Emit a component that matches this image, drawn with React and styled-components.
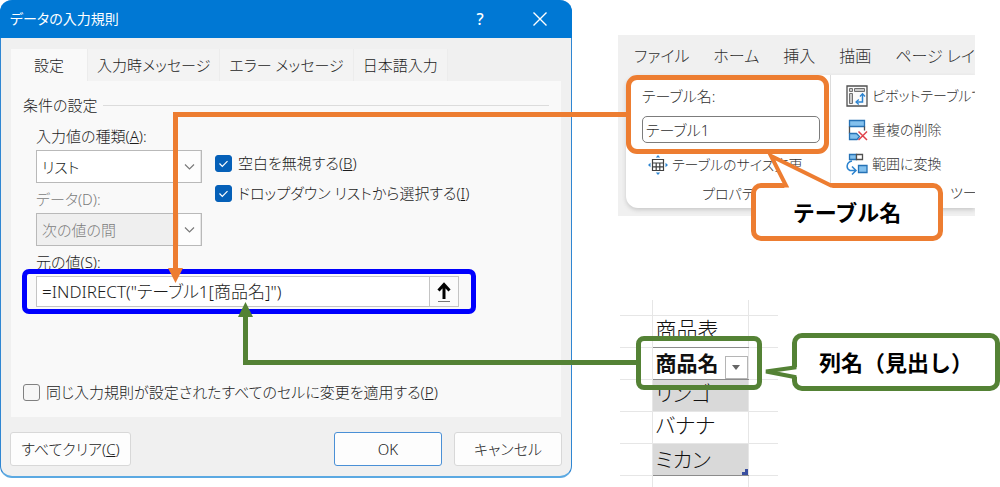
import React from 'react';
import styled, { createGlobalStyle, css } from 'styled-components';

const ORANGE = '#ed7d31';
const GREEN = '#548235';
const BLUE = '#0000fe';

const GlobalStyle = createGlobalStyle`
  * { box-sizing: border-box; }
  body {
    margin: 0;
    background: #fff;
    color: #1c1c1c;
    font-family: "Noto Sans", "Noto Sans CJK JP", sans-serif;
    font-size: 15px;
    font-weight: 300;
    line-height: 24px;
    font-feature-settings: "palt";
  }
  button, input, select {
    font: inherit;
    font-feature-settings: inherit;
    color: inherit;
    margin: 0;
  }
`;

const Page = styled.div`
  display: flex;
  align-items: flex-start;
  min-height: 100vh;
  overflow: hidden;
`;

/* ---------- dialog ---------- */

const Dialog = styled.section`
  position: relative;
  flex: 1 1 auto;
  min-width: 500px;
  background: #f0f0f0;
  border: 1px solid #2f86d2;
  border-width: 0 1px 2px 1px;
  border-bottom-color: #5ba9e2;
  border-radius: 12px;
`;

const TitleBar = styled.header`
  display: flex;
  align-items: center;
  height: 38px;
  margin: 0 -1px;
  padding: 0 16px 0 10px;
  background: #0078d4;
  color: #fff;
  border-radius: 12px 12px 0 0;
`;

const Title = styled.h1`
  flex: 1;
  margin: 0;
  font-size: 14px;
  font-weight: 400;
`;

const TitleButton = styled.button`
  display: flex;
  align-items: center;
  justify-content: center;
  width: 32px;
  height: 32px;
  margin-left: 28px;
  padding: 0;
  border: 0;
  background: none;
  color: #fff;
  font-size: 16px;
  font-weight: 500;
`;

const Tabs = styled.div`
  display: flex;
  margin: 11px 10px 0;
`;

const Tab = styled.button`
  height: 32px;
  padding: 0 9px;
  border: 0;
  border-right: 1px solid #ececec;
  background: #f3f3f3;
  white-space: nowrap;
  ${p => p.$active && css`
    padding: 0 23px;
    background: #f9f9f9;
  `}
`;

const Panel = styled.div`
  margin: 0 10px;
  padding: 12px 12px 13px;
  background: #f9f9f9;
`;

const Legend = styled.h2`
  display: flex;
  align-items: center;
  gap: 6px;
  margin: 0;
  font-size: 15px;
  font-weight: 300;
  &::after {
    content: "";
    flex: 1;
    height: 1px;
    background: #dcdcdc;
  }
`;

const Fields = styled.div`
  display: flex;
  gap: 13px;
  padding: 7px 0 0 13px;
`;

const Column = styled.div`
  display: flex;
  flex-direction: column;
`;

const Label = styled.label`
  display: block;
  height: 26px;
  line-height: 24px;
  color: ${p => (p.$muted ? '#7c7c7c' : 'inherit')};
`;

const SelectBox = styled.div`
  position: relative;
  width: 166px;
  height: 33px;
  margin-bottom: 4px;
  svg {
    position: absolute;
    top: 1px;
    right: 1px;
    pointer-events: none;
  }
`;

const Select = styled.select`
  appearance: none;
  width: 100%;
  height: 100%;
  padding: 0 24px 0 5px;
  border: 1px solid #b9b9b9;
  border-radius: 0;
  background: #fff;
  opacity: 1;
  &:disabled {
    background: #efefef;
    color: #7c7c7c;
  }
`;

const Checks = styled.div`
  display: flex;
  flex-direction: column;
  gap: 6px;
  padding-top: 27px;
`;

const CheckLabel = styled.label`
  display: flex;
  align-items: center;
  gap: 6px;
  white-space: nowrap;
`;

const CheckInput = styled.input`
  appearance: none;
  flex: none;
  width: 17px;
  height: 17px;
  border: 1px solid #808080;
  border-radius: 3px;
  background: #f6f6f6;
  &:checked {
    border-color: #0560b8;
    background: #0560b8 url("data:image/svg+xml,%3Csvg xmlns='http://www.w3.org/2000/svg' viewBox='0 0 15 15'%3E%3Cpath d='M3.5 7.5l2.8 2.8 5.2-5.2' fill='none' stroke='white' stroke-width='1.2'/%3E%3C/svg%3E");
  }
`;

const Source = styled.div`
  padding-left: 13px;
`;

const SourceField = styled.div`
  position: relative;
  display: flex;
  width: 423px;
  height: 31px;
  border: 1px solid #c4c4c4;
  background: #fff;
`;

const SourceInput = styled.input`
  flex: 1;
  min-width: 0;
  padding: 0 5px;
  border: 0;
  background: none;
  font-size: 17px;
`;

const PickButton = styled.button`
  display: flex;
  align-items: center;
  justify-content: center;
  width: 29px;
  padding: 0;
  border: 0;
  border-left: 1px solid #c4c4c4;
  background: #fbfbfb;
`;

const ApplyRow = styled.div`
  padding-top: 73px;
`;

const Footer = styled.footer`
  display: flex;
  gap: 12px;
  padding: 15px 9px 10px;
`;

const PushButton = styled.button`
  width: ${p => p.$width}px;
  height: 34px;
  margin-right: ${p => (p.$first ? 'auto' : '0')};
  padding: 0;
  border: 1px solid ${p => (p.$default ? '#4a90d6' : '#d8d8d8')};
  border-radius: 3px;
  background: #fdfdfd;
`;

/* ---------- annotations drawn over the windows ---------- */

const Ring = styled.div`
  position: absolute;
  inset: ${p => p.$inset};
  border: 5px solid ${p => p.$color};
  border-radius: ${p => p.$radius}px;
  pointer-events: none;
`;

const Connector = styled.div`
  position: absolute;
  left: ${p => p.$left}px;
  right: ${p => p.$right}px;
  top: ${p => p.$top}px;
  height: ${p => p.$height}px;
  border: 0 solid ${p => p.$color};
  border-left-width: 5px;
  border-top-width: ${p => (p.$up ? 0 : 5)}px;
  border-bottom-width: ${p => (p.$up ? 5 : 0)}px;
  pointer-events: none;
  z-index: 2;
  &::before {
    content: "";
    position: absolute;
    left: -10px;
    ${p => (p.$up ? 'top' : 'bottom')}: -14px;
    width: 15px;
    height: 15px;
    background: ${p => p.$color};
    clip-path: ${p => (p.$up ? 'polygon(50% 0, 100% 100%, 0 100%)' : 'polygon(0 0, 100% 0, 50% 100%)')};
  }
`;

const CalloutBox = styled.div`
  position: absolute;
  left: ${p => p.$left}px;
  top: ${p => p.$top}px;
  width: ${p => p.$width}px;
  height: 58px;
  display: flex;
  align-items: center;
  justify-content: center;
  border: 5px solid ${p => p.$color};
  border-radius: 10px;
  background: #fff;
  color: #000;
  font-size: 22px;
  font-weight: 700;
  font-feature-settings: normal;
  white-space: nowrap;
  z-index: 3;
  svg {
    position: absolute;
    overflow: visible;
    left: -5px;
    top: -5px;
  }
`;

/* ---------- ribbon ---------- */

const Side = styled.aside`
  flex: 0 0 428px;
  min-width: 0;
  padding: 35px 0 0 46px;
`;

const RibbonWrap = styled.div`
  position: relative;
  margin-right: 25px;
`;

const Ribbon = styled.section`
  height: 181px;
  overflow: hidden;
  background: #f0f0f0;
  color: #303030;
`;

const RibbonTabs = styled.nav`
  display: flex;
  gap: 24px;
  height: 40px;
  padding: 0 0 0 16px;
  line-height: 42px;
  font-size: 16px;
  white-space: nowrap;
`;

const RibbonTab = styled.a`
  color: inherit;
  text-decoration: none;
`;

const RibbonBody = styled.div`
  display: flex;
  height: 133px;
  margin-left: 8px;
  border-radius: 12px 0 0 12px;
  background: #fff;
  box-shadow: 0 2px 4px #c9c9c9;
`;

const NameGroup = styled.div`
  position: relative;
  flex: 0 0 205px;
  padding: 9px 10px 0 16px;
  border-right: 1px solid #dcdcdc;
`;

const NameLabel = styled.label`
  display: block;
  height: 32px;
`;

const NameInput = styled.input`
  display: block;
  width: 178px;
  height: 27px;
  padding: 0 3px;
  border: 1px solid #7c7c7c;
  border-radius: 5px;
  background: #fff;
`;

const ToolButton = styled.button`
  display: flex;
  align-items: center;
  gap: 4px;
  height: 34px;
  padding: 0;
  border: 0;
  background: none;
  font-size: 14px;
  white-space: nowrap;
`;

const ResizeRow = styled.div`
  padding: 5px 0 0 6px;
`;

const GroupName = styled.div`
  padding-left: ${p => p.$indent}px;
  font-size: 14px;
  line-height: 24px;
  white-space: nowrap;
`;

const ToolGroup = styled.div`
  flex: 1;
  min-width: 0;
  padding: 4px 0 0 15px;
`;

/* ---------- sheet ---------- */

const SheetWrap = styled.div`
  position: relative;
  margin-top: 84px;
`;

const Sheet = styled.table`
  width: 158px;
  margin-left: 2px;
  table-layout: fixed;
  border-collapse: collapse;
  color: #111;
  font-size: 21px;
`;

const Cell = styled.td`
  height: ${p => p.$height || 32}px;
  padding: 0 0 ${p => (p.$flush ? 0 : 4)}px 3px;
  border: 1px solid #e6e6e6;
  border-top-width: ${p => (p.$first ? 0 : 1)}px;
  border-bottom-color: ${p => (p.$ruled ? '#8c8c8c' : '#e6e6e6')};
  background: ${p => (p.$band ? '#d9d9d9' : '#fff')};
  line-height: 26px;
  text-align: left;
  white-space: nowrap;
`;

const EdgeCell = styled(Cell)`
  width: ${p => p.$width}px;
  padding: 0;
  border-left: 0;
  border-right: 0;
`;

const CellInner = styled.div`
  display: flex;
  align-items: center;
  justify-content: space-between;
  height: 31px;
  font-weight: ${p => (p.$head ? 700 : 300)};
  > :last-child {
    align-self: flex-end;
  }
`;

const FilterButton = styled.button`
  display: flex;
  align-items: center;
  justify-content: center;
  width: 23px;
  height: 23px;
  padding: 0;
  border: 1px solid #b5b5b5;
  background: #fff;
`;

/* ---------- pieces ---------- */

const Chevron = () => (
  <svg width="22" height="31" viewBox="0 0 22 31">
    <path d="M0 0h22v31H0z" fill="#fdfdfd" />
    <path d="M22 0v31" stroke="#d0d0d0" />
    <path d="M6 13.500l4.500 4.500 4.500-4.500" fill="none" stroke="#7a7a7a" strokeWidth="1.200" />
  </svg>
);

const PivotIcon = () => (
  <svg width="22" height="22" viewBox="0 0 22 22" fill="none">
    <path d="M1 1h20v20H1z" fill="#fafafa" stroke="#505050" strokeWidth="1.300" />
    <path d="M3.500 3.500h3v3h-3zM8.500 3.500h10v3h-10zM3.500 8.500h3v10h-3z" fill="#c9c9c9" stroke="#707070" />
    <path d="M16.500 9.500v7.500h-6" stroke="#2b83cf" strokeWidth="1.500" />
    <path d="M14 11.500l2.500-2.800 2.500 2.800M12.800 14.400L10 17l2.800 2.600" stroke="#2b83cf" strokeWidth="1.300" />
  </svg>
);

const DedupeIcon = () => (
  <svg width="22" height="22" viewBox="0 0 22 22" fill="none">
    <path d="M3.500 1.500h15v6h-15z" fill="#83c1ee" stroke="#2672b5" strokeWidth="1.300" />
    <path d="M3.500 7.500v7M18.500 7.500v4" stroke="#505050" strokeWidth="1.300" />
    <path d="M3.500 14.500h7l3 3-2.500 3H3.500z" fill="#83c1ee" stroke="#2672b5" strokeWidth="1.300" />
    <path d="M12.500 12.500l8.500 8.500M21 12.500L12.500 21" stroke="#e0424a" strokeWidth="1.500" />
  </svg>
);

const ConvertIcon = () => (
  <svg width="22" height="22" viewBox="0 0 22 22" fill="none">
    <path d="M3.500 1.500h7v5h-7z" fill="#83c1ee" stroke="#2672b5" strokeWidth="1.300" />
    <path d="M10.500 1.500h6v5h-6z" fill="#fff" stroke="#505050" strokeWidth="1.300" />
    <path d="M12.500 12.500h8.500v7h-8.500z" fill="#83c1ee" stroke="#2672b5" strokeWidth="1.300" />
    <path d="M6 8C.500 9-.500 15.500 4 17.500h5.500M6 13.500l4 4-4 4" stroke="#2b83cf" strokeWidth="1.500" />
  </svg>
);

const ResizeIcon = () => (
  <svg width="20" height="20" viewBox="0 0 20 20" fill="none">
    <path d="M4.500 4.500h11v11h-11zM4.500 8h11M4.500 11.800h11M8.200 8v7.500M11.800 8v7.500" stroke="#404040" strokeWidth="1.200" />
    <path d="M10 0l2.200 2.500H7.800zM10 20l2.200-2.500H7.800zM0 10l2.500-2.200v4.400zM20 10l-2.500-2.200v4.400z" fill="#2b83cf" />
  </svg>
);

const Check = ({ id, checked, text, accessKey }) => (
  <CheckLabel htmlFor={id}>
    <CheckInput id={id} type="checkbox" defaultChecked={checked} />
    <span>{text}(<u>{accessKey}</u>)</span>
  </CheckLabel>
);

const Edge = ({ width, height, first }) => (
  <EdgeCell $width={width} $height={height} $first={first} />
);

export default function App() {
  return (
    <>
      <GlobalStyle />
      <Page>
        <Dialog>
          <TitleBar>
            <Title>データの入力規則</Title>
            <TitleButton aria-label="ヘルプ">?</TitleButton>
            <TitleButton aria-label="閉じる">
              <svg width="14" height="14" viewBox="0 0 14 14">
                <path d="M.500 .500l13 13M13.500 .500l-13 13" stroke="#fff" strokeWidth="1.400" />
              </svg>
            </TitleButton>
          </TitleBar>

          <Tabs role="tablist">
            <Tab role="tab" $active>設定</Tab>
            <Tab role="tab">入力時メッセージ</Tab>
            <Tab role="tab">エラー メッセージ</Tab>
            <Tab role="tab">日本語入力</Tab>
          </Tabs>

          <Panel>
            <Legend>条件の設定</Legend>
            <Fields>
              <Column>
                <Label htmlFor="kind">入力値の種類(<u>A</u>):</Label>
                <SelectBox>
                  <Select id="kind"><option>リスト</option></Select>
                  <Chevron />
                </SelectBox>
                <Label htmlFor="data" $muted>データ(D):</Label>
                <SelectBox>
                  <Select id="data" disabled><option>次の値の間</option></Select>
                  <Chevron />
                </SelectBox>
              </Column>
              <Checks>
                <Check id="blank" checked text="空白を無視する" accessKey="B" />
                <Check id="drop" checked text="ドロップダウン リストから選択する" accessKey="I" />
              </Checks>
            </Fields>
            <Source>
              <Label htmlFor="source">元の値(<u>S</u>):</Label>
              <SourceField>
                <SourceInput id="source" defaultValue={'=INDIRECT("テーブル1[商品名]")'} />
                <PickButton aria-label="範囲を選択">
                  <svg width="14" height="20" viewBox="0 0 14 20" fill="none">
                    <path d="M7 17V3M1.500 8.500L7 2.500l5.500 6" stroke="#000" strokeWidth="3" />
                    <path d="M1 19.500h12" stroke="#777" />
                  </svg>
                </PickButton>
                <Ring $inset="-8px -18px -8px -15px" $color={BLUE} $radius={7} />
              </SourceField>
            </Source>
            <ApplyRow>
              <Check id="apply" text="同じ入力規則が設定されたすべてのセルに変更を適用する" accessKey="P" />
            </ApplyRow>
          </Panel>

          <Footer>
            <PushButton $width={121} $first>すべてクリア(<u>C</u>)</PushButton>
            <PushButton $width={108} $default>OK</PushButton>
            <PushButton $width={108}>キャンセル</PushButton>
          </Footer>

          <Connector $color={ORANGE} $left={172} $right={-56} $top={112} $height={157} />
          <Connector $color={GREEN} $up $left={242} $right={-66} $top={316} $height={49} />
        </Dialog>

        <Side>
          <RibbonWrap>
            <Ribbon>
              <RibbonTabs>
                <RibbonTab href="#file">ファイル</RibbonTab>
                <RibbonTab href="#home">ホーム</RibbonTab>
                <RibbonTab href="#insert">挿入</RibbonTab>
                <RibbonTab href="#draw">描画</RibbonTab>
                <RibbonTab href="#layout">ページ レイ</RibbonTab>
              </RibbonTabs>
              <RibbonBody>
                <NameGroup>
                  <NameLabel htmlFor="tname">テーブル名:</NameLabel>
                  <NameInput id="tname" defaultValue="テーブル1" />
                  <ResizeRow>
                    <ToolButton><ResizeIcon />テーブルのサイズ変更</ToolButton>
                  </ResizeRow>
                  <GroupName $indent={60}>プロパティ</GroupName>
                  <Ring $inset="0 1px 54px 0" $color={ORANGE} $radius={11} />
                </NameGroup>
                <ToolGroup>
                  <ToolButton><PivotIcon />ピボットテーブルで</ToolButton>
                  <ToolButton><DedupeIcon />重複の削除</ToolButton>
                  <ToolButton><ConvertIcon />範囲に変換</ToolButton>
                  <GroupName $indent={104}>ツー</GroupName>
                </ToolGroup>
              </RibbonBody>
            </Ribbon>
            <CalloutBox $color={ORANGE} $left={133} $top={148} $width={192}>
              <svg width="90" height="40" viewBox="0 0 90 40">
                <path d="M34 6L20-27 84 6z" fill="#fff" />
                <path d="M30 2.500h5L20-27 80 2.500h5" fill="none" stroke={ORANGE} strokeWidth="4" />
              </svg>
              テーブル名
            </CalloutBox>
          </RibbonWrap>

          <SheetWrap>
            <Sheet>
              <tbody>
                <tr>
                  <Edge width={32} height={15} first />
                  <Cell $height={15} $first />
                  <Edge width={30} height={15} first />
                </tr>
                <tr><Edge /><Cell $ruled>商品表</Cell><Edge /></tr>
                <tr>
                  <Edge />
                  <Cell as="th" scope="col" $ruled $flush>
                    <CellInner $head>
                      商品名
                      <FilterButton aria-label="絞り込み">
                        <svg width="8" height="5" viewBox="0 0 8 5"><path d="M0 0h8L4 5z" fill="#666" /></svg>
                      </FilterButton>
                    </CellInner>
                  </Cell>
                  <Edge />
                </tr>
                <tr><Edge /><Cell $band>リンゴ</Cell><Edge /></tr>
                <tr><Edge /><Cell>バナナ</Cell><Edge /></tr>
                <tr>
                  <Edge />
                  <Cell $band $ruled $flush>
                    <CellInner>
                      ミカン
                      <svg width="6" height="6" viewBox="0 0 6 6"><path d="M6 0v6H0V3h3V0z" fill="#3a4fa0" /></svg>
                    </CellInner>
                  </Cell>
                  <Edge />
                </tr>
                <tr><Edge height={13} /><Cell $height={13} $flush /><Edge height={13} /></tr>
              </tbody>
            </Sheet>
            <Ring $inset="36px 238px 99px 18px" $color={GREEN} $radius={8} />
            <CalloutBox $color={GREEN} $left={174} $top={33} $width={208}>
              <svg width="40" height="58" viewBox="0 0 40 58">
                <path d="M6 34L-28 38.500 6 44z" fill="#fff" />
                <path d="M2.500 30v4.500L-26 38.500 2.500 44v4" fill="none" stroke={GREEN} strokeWidth="4" />
              </svg>
              列名（見出し）
            </CalloutBox>
          </SheetWrap>
        </Side>
      </Page>
    </>
  );
}
